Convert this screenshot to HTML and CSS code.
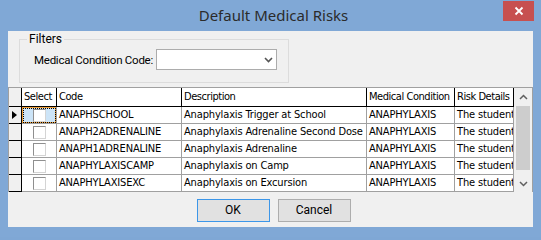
FILE: index.html
```html
<!DOCTYPE html>
<html>
<head>
<meta charset="utf-8">
<link rel="stylesheet" href="styles.css">
</head>
<body>
<div class="window">
  <div class="titlebar">
    <div class="tb-side"></div>
    <div class="title">Default Medical Risks</div>
    <div class="tb-side tb-right">
      <div class="close"><svg width="10" height="10" viewBox="0 0 10 10"><path d="M1.5 1.5 L8.5 8.5 M8.5 1.5 L1.5 8.5" stroke="#fff" stroke-width="1.8" fill="none"/></svg></div>
    </div>
  </div>
  <div class="client">
    <fieldset class="filters">
      <legend>Filters</legend>
      <div class="filter-row">
        <span class="lbl">Medical Condition Code:</span>
        <div class="combo"><svg width="9" height="6" viewBox="0 0 9 6"><path d="M1 1 L4.5 4.5 L8 1" stroke="#555" stroke-width="1.6" fill="none"/></svg></div>
      </div>
    </fieldset>
    <div class="grid">
      <div class="table">
        <div class="row head">
          <div class="c rh"></div>
          <div class="c hc">Select</div>
          <div class="c hc">Code</div>
          <div class="c hc">Description</div>
          <div class="c hc">Medical Condition</div>
          <div class="c hc">Risk Details</div>
        </div>
        <div class="row">
          <div class="c rh"><span class="arrow"></span></div>
          <div class="c chk focus"><span class="box"></span></div>
          <div class="c">ANAPHSCHOOL</div>
          <div class="c">Anaphylaxis Trigger at School</div>
          <div class="c">ANAPHYLAXIS</div>
          <div class="c">The student has</div>
        </div>
        <div class="row">
          <div class="c rh"></div>
          <div class="c chk"><span class="box"></span></div>
          <div class="c">ANAPH2ADRENALINE</div>
          <div class="c">Anaphylaxis Adrenaline Second Dose</div>
          <div class="c">ANAPHYLAXIS</div>
          <div class="c">The student has</div>
        </div>
        <div class="row">
          <div class="c rh"></div>
          <div class="c chk"><span class="box"></span></div>
          <div class="c">ANAPH1ADRENALINE</div>
          <div class="c">Anaphylaxis Adrenaline</div>
          <div class="c">ANAPHYLAXIS</div>
          <div class="c">The student has</div>
        </div>
        <div class="row">
          <div class="c rh"></div>
          <div class="c chk"><span class="box"></span></div>
          <div class="c">ANAPHYLAXISCAMP</div>
          <div class="c">Anaphylaxis on Camp</div>
          <div class="c">ANAPHYLAXIS</div>
          <div class="c">The student has</div>
        </div>
        <div class="row">
          <div class="c rh"></div>
          <div class="c chk"><span class="box"></span></div>
          <div class="c">ANAPHYLAXISEXC</div>
          <div class="c">Anaphylaxis on Excursion</div>
          <div class="c">ANAPHYLAXIS</div>
          <div class="c">The student has</div>
        </div>
      </div>
      <div class="vscroll">
        <div class="sb-btn"><svg width="9" height="6" viewBox="0 0 9 6"><path d="M1 5 L4.5 1.5 L8 5" stroke="#606060" stroke-width="1.5" fill="none"/></svg></div>
        <div class="thumb"></div>
        <div class="track"></div>
        <div class="sb-btn"><svg width="9" height="6" viewBox="0 0 9 6"><path d="M1 1 L4.5 4.5 L8 1" stroke="#606060" stroke-width="1.5" fill="none"/></svg></div>
      </div>
    </div>
    <div class="buttons">
      <div class="btn default">OK</div>
      <div class="btn">Cancel</div>
    </div>
  </div>
</div>
</body>
</html>
```
FILE: styles.css
```css
html, body {
  margin: 0;
  padding: 0;
}
body {
  width: 541px;
  height: 237px;
  overflow: hidden;
  background: #7fa7d5;
}
.window {
  width: 541px;
  height: 237px;
  box-sizing: border-box;
  background: #80a8d6;
  display: flex;
  flex-direction: column;
  font-family: Roboto, "Noto Sans", sans-serif;
}
.titlebar {
  height: 31px;
  display: grid;
  grid-template-columns: 1fr auto 1fr;
}
.title {
  font-family: "Noto Sans", sans-serif;
  font-size: 15px;
  color: #2b2b2b;
  line-height: 31px;
  padding-left: 6px;
}
.tb-right {
  display: flex;
  justify-content: flex-end;
  align-items: flex-start;
  padding: 1px 7px 0 0;
}
.close {
  width: 31px;
  height: 20px;
  background: #c75050;
  display: flex;
  align-items: center;
  justify-content: center;
}
.client {
  margin: 0 8px;
  height: 196px;
  background: #f0f0f0;
  display: flex;
  flex-direction: column;
}
.filters {
  margin: 0 0 0 11px;
  padding: 2px 0 12px 0;
  width: 270px;
  box-sizing: border-box;
  border: 1px solid #dcdcdc;
  min-width: 0;
}
.filters legend {
  margin-left: 7px;
  padding: 0 2px;
  font-size: 12px;
  line-height: 16px;
  color: #000;
}
.filter-row {
  display: flex;
  align-items: center;
  padding-left: 14px;
  gap: 7px;
}
.lbl {
  font-size: 11.5px;
  letter-spacing: -0.25px;
  color: #000;
  white-space: nowrap;
  width: 115px;
  flex-shrink: 0;
}
.combo {
  width: 121px;
  height: 21px;
  box-sizing: border-box;
  border: 1px solid #acacac;
  background: #fff;
  display: flex;
  align-items: center;
  justify-content: flex-end;
  padding-right: 3px;
}
.grid {
  margin-top: 4px;
  border: 1px solid #a0a0a0;
  border-bottom: none;
  display: flex;
  background: #f0f0f0;
}
.table {
  width: 505px;
  font-family: "DejaVu Sans", sans-serif;
  font-stretch: condensed;
  font-size: 11px;
  letter-spacing: -0.15px;
  color: #000;
}
.row {
  display: grid;
  grid-template-columns: 13px 35px 125px 185px 88px 59px;
  height: 17px;
}
.row.head {
  height: 19px;
}
.c {
  box-sizing: border-box;
  border-right: 1px solid #a0a0a0;
  border-bottom: 1px solid #a0a0a0;
  background: #fff;
  padding-left: 2px;
  white-space: nowrap;
  overflow: hidden;
  line-height: 16px;
}
.head .c {
  border-right-color: #000;
  border-bottom-color: #000;
  line-height: 18px;
  letter-spacing: -0.45px;
}
.c.rh {
  background: #f0f0f0;
  border-right-color: #000;
  border-bottom-color: #000;
  padding: 0;
  display: flex;
  align-items: center;
  justify-content: center;
}
.arrow {
  width: 0;
  height: 0;
  border-top: 4.5px solid transparent;
  border-bottom: 4.5px solid transparent;
  border-left: 5px solid #000;
  margin-left: -1px;
}
.c.chk {
  display: flex;
  align-items: center;
  justify-content: center;
  padding: 0;
}
.c.focus {
  background: #cce4f7;
  box-shadow: inset 0 0 0 1px #f2a23a;
  outline: 1px dotted #000;
  outline-offset: -2px;
}
.box {
  width: 13px;
  height: 13px;
  box-sizing: border-box;
  border: 1px solid;
  border-color: #8f8f8f #d4d4d4 #d4d4d4 #8f8f8f;
  background: #fff;
}
.vscroll {
  width: 18px;
  display: flex;
  flex-direction: column;
  background: #f0f0f0;
}
.sb-btn {
  height: 17px;
  display: flex;
  align-items: center;
  justify-content: center;
}
.thumb {
  height: 64px;
  margin: 1px 2px 0 2px;
  background: #cdcdcd;
}
.track {
  flex: 1;
}
.buttons {
  display: flex;
  justify-content: center;
  gap: 8px;
  margin-top: 7px;
  padding-left: 6px;
}
.btn {
  width: 73px;
  height: 23px;
  box-sizing: border-box;
  border: 1px solid #adadad;
  background: #e1e1e1;
  font-size: 12px;
  line-height: 21px;
  text-align: center;
  color: #000;
}
.btn.default {
  border-color: #3c96e8;
}
```
